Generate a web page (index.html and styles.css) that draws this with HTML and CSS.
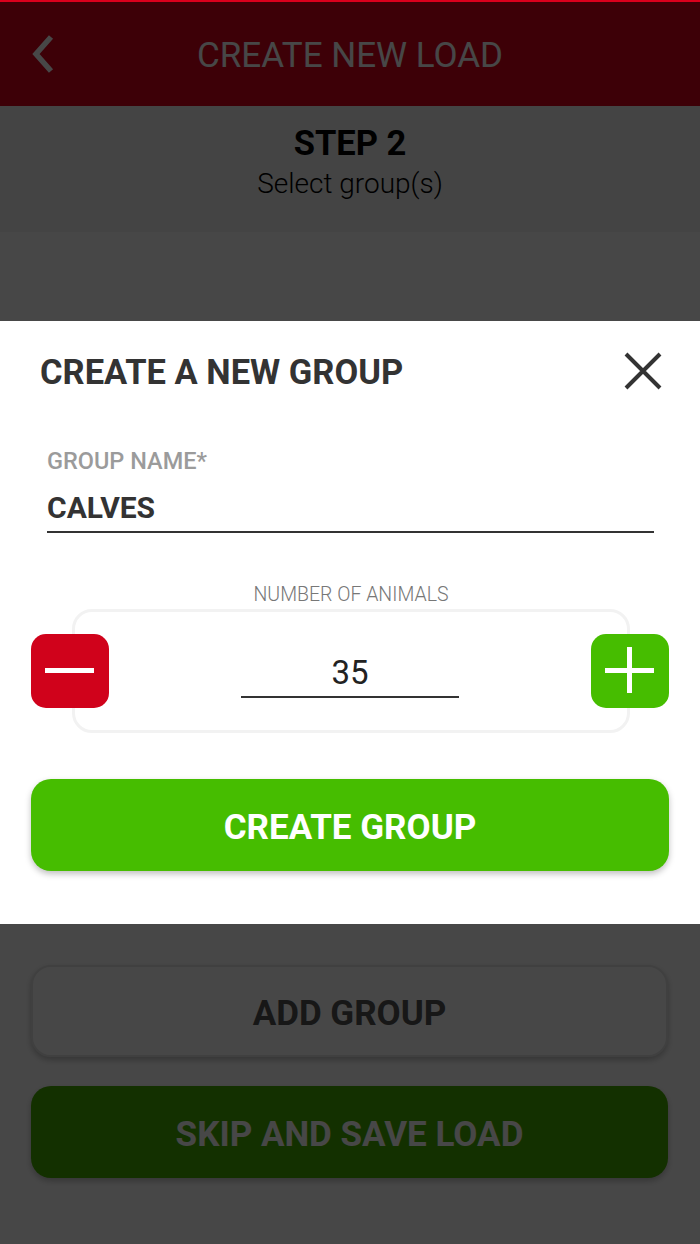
FILE: index.html
```html
<!DOCTYPE html>
<html>
<head>
<meta charset="utf-8">
<link rel="stylesheet" href="styles.css">
</head>
<body>
<div class="app">
  <header class="topbar">
    <svg class="back" width="26" height="40" viewBox="0 0 26 40"><path d="M21 3 L6 20 L21 37" fill="none" stroke="#fff" stroke-width="5.5"/></svg>
    <h1 class="title">CREATE NEW LOAD</h1>
  </header>
  <section class="step">
    <div class="step-num">STEP 2</div>
    <div class="step-sub">Select group(s)</div>
  </section>
  <main class="content">
    <div class="btn btn-outline">ADD GROUP</div>
    <div class="btn btn-green">SKIP AND SAVE LOAD</div>
  </main>
</div>
<div class="overlay"></div>
<div class="modal">
  <div class="modal-head">
    <h2 class="modal-title">CREATE A NEW GROUP</h2>
    <svg class="close" width="40" height="40" viewBox="0 0 40 40"><path d="M3 3 L37 37 M37 3 L3 37" stroke="#333" stroke-width="4"/></svg>
  </div>
  <div class="field">
    <div class="field-label">GROUP NAME*</div>
    <div class="field-value">CALVES</div>
  </div>
  <div class="counter-label">NUMBER OF ANIMALS</div>
  <div class="counter">
    <div class="step-btn minus"><span class="bar-h"></span></div>
    <div class="counter-value">35</div>
    <div class="step-btn plus"><span class="bar-h"></span><span class="bar-v"></span></div>
  </div>
  <div class="btn btn-create">CREATE GROUP</div>
</div>
</body>
</html>
```
FILE: styles.css
```css
* { box-sizing: border-box; margin: 0; padding: 0; }
html, body { width: 700px; height: 1244px; overflow: hidden; }
body { font-family: Roboto, "Liberation Sans", sans-serif; background: #fff; position: relative; }

.app { display: flex; flex-direction: column; height: 1244px; }
.topbar { height: 106px; background: #d9001c; display: flex; align-items: center; justify-content: center; position: relative; }
.back { position: absolute; left: 30px; top: 34px; }
.title { font-weight: 400; font-size: 35px; color: #fff; margin-top: 4px; }

.step { height: 126px; background: #f2f2f2; display: flex; flex-direction: column; align-items: center; padding-top: 17px; }
.step-num { font-weight: 700; font-size: 34.5px; color: #000; line-height: 40px; }
.step-sub { font-weight: 300; font-size: 28px; color: #000; line-height: 40px; margin-top: 1px; }

.content { flex: 1; display: flex; flex-direction: column; gap: 29px; padding: 733px 32px 0 31px; }
.btn { height: 92px; border-radius: 20px; display: flex; align-items: center; justify-content: center; font-weight: 700; font-size: 35px; padding-top: 4px; }
.btn-outline { background: #fff; border: 2px solid #e6e6e6; color: #555; box-shadow: 0 3px 6px rgba(0,0,0,0.25); }
.btn-green { background: #46ab00; color: #fff; box-shadow: 0 3px 6px rgba(0,0,0,0.25); }

.overlay { position: absolute; left: 0; right: 0; top: 2px; bottom: 0; background: rgba(0,0,0,0.72); }

.modal { position: absolute; left: 0; right: 0; top: 321px; height: 603px; background: #fff; padding: 29px 31px 0 31px; }
.modal-head { display: flex; justify-content: space-between; align-items: center; padding-left: 9px; }
.modal-title { font-weight: 700; font-size: 34.5px; color: #333; line-height: 44px; }
.close { margin-right: 6px; margin-top: -2px; }

.field { margin: 53px 15px 0 16px; border-bottom: 2px solid #333; padding-bottom: 6px; }
.field-label { font-weight: 500; font-size: 23.5px; color: #9b9b9b; line-height: 28px; }
.field-value { font-weight: 700; font-size: 30px; color: #333; line-height: 34px; margin-top: 16px; }

.counter-label { text-align: center; font-weight: 300; font-size: 19.5px; color: #777; margin-top: 50px; line-height: 24px; padding-left: 2px; }
.counter { margin: 2px 0 0 0; height: 124px; display: flex; align-items: center; justify-content: space-between; position: relative; }
.counter::before { content: ""; position: absolute; left: 41px; right: 39px; top: 0; bottom: 0; border: 3px solid #f2f2f2; border-radius: 20px; }
.step-btn { width: 78px; height: 74px; border-radius: 15px; position: relative; z-index: 1; display: flex; align-items: center; justify-content: center; }
.minus { background: #d0021b; }
.plus { background: #46bd00; }
.bar-h { position: absolute; left: 14px; right: 15px; top: 34px; height: 5px; background: #fff; }
.bar-v { position: absolute; top: 13px; bottom: 15px; left: 36px; width: 5px; background: #fff; }
.counter-value { position: relative; z-index: 1; width: 218px; text-align: center; font-size: 33px; font-weight: 400; color: #222; border-bottom: 2px solid #333; line-height: 40px; padding-bottom: 3px; margin-top: 9px; }

.btn-create { margin-top: 46px; background: #46bd00; color: #fff; box-shadow: 0 3px 6px rgba(0,0,0,0.25); }
```
